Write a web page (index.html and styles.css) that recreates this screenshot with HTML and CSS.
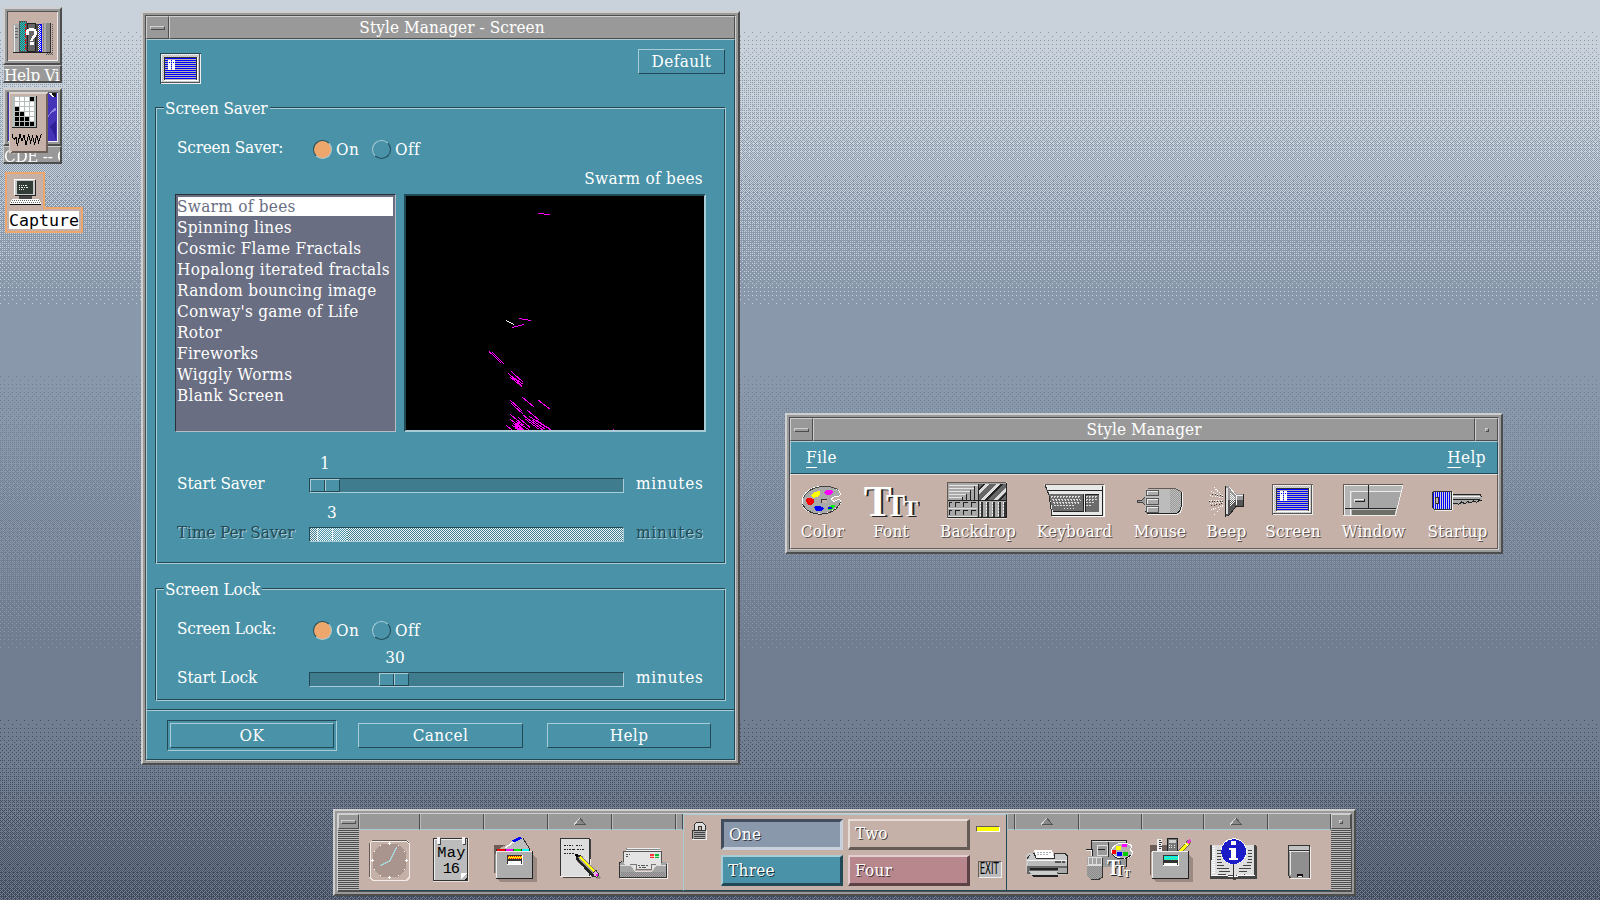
FILE: index.html
```html
<!DOCTYPE html>
<html lang="en">
<head>
<meta charset="utf-8">
<title>Style Manager - Screen</title>
<link rel="stylesheet" href="styles.css">
</head>
<body>
<svg class="defs" width="0" height="0">
  <defs>
    <pattern id="dots" width="6" height="6" patternUnits="userSpaceOnUse"><rect width="3" height="3" fill="#555"/><rect x="3" y="3" width="3" height="3" fill="#555"/></pattern>
    <pattern id="lite" width="6" height="6" patternUnits="userSpaceOnUse"><rect width="3" height="3" fill="#fff"/><rect x="3" y="3" width="3" height="3" fill="#fff"/></pattern>
    <pattern id="bluelines" width="6" height="6" patternUnits="userSpaceOnUse"><rect width="6" height="6" fill="#b4b4b4"/><rect width="6" height="3" fill="#00f"/></pattern>
    <pattern id="bluecols" width="6" height="6" patternUnits="userSpaceOnUse"><rect width="6" height="6" fill="#d0d0d8"/><rect x="3" width="3" height="6" fill="#00f"/></pattern>
    <pattern id="bluedots" width="6" height="6" patternUnits="userSpaceOnUse"><rect width="6" height="6" fill="#00f"/><rect width="3" height="3" fill="#555"/><rect x="3" y="3" width="3" height="3" fill="#555"/></pattern>
    <pattern id="keys" width="9" height="9" patternUnits="userSpaceOnUse"><rect width="9" height="9" fill="#6c6c6c"/><path d="M0 1.5H6M1.5 0V6" stroke="#ddd" stroke-width="3"/></pattern>
    <g id="monitor">
      <rect x="426" y="237" width="123" height="93" fill="#655a55"/>
      <rect x="429" y="240" width="120" height="90" fill="#eee"/>
      <rect x="432" y="243" width="111" height="81" fill="#bdbdbd"/>
      <rect x="432" y="243" width="111" height="81" fill="url(#lite)" opacity=".4"/>
      <rect x="543" y="240" width="3" height="87" fill="#555"/><rect x="429" y="324" width="117" height="3" fill="#555"/>
      <rect x="438" y="249" width="102" height="72" fill="#fff"/>
      <rect x="438" y="249" width="99" height="69" fill="#333"/>
      <rect x="441" y="252" width="93" height="66" fill="url(#bluelines)"/>
      <path d="M450 258h9v30h-9zM462 258h9v30h-9z" fill="#fff"/><path d="M453 264h3v3h-3zM465 264h3v3h-3z" fill="#00f"/>
    </g>
  </defs>
</svg>
<canvas class="backdrop" width="1600" height="900"></canvas>

<div class="icon-window help-icon">
  <div class="picture">
    <svg width="49" height="48" viewBox="24 36 147 144">
      <path d="M60 156h96V72h3v93h-22v-6H60z" fill="url(#dots)"/>
      <rect x="39" y="72" width="18" height="84" fill="#aaa"/><path d="M42 74V156" stroke="#eee" stroke-width="3"/><path d="M45 84h9M45 93h9M45 102h9M45 111h9" stroke="#666" stroke-width="3"/>
      <rect x="57" y="64" width="24" height="92" fill="#555"/><rect x="60" y="66" width="18" height="88" fill="#0dd"/><rect x="60" y="66" width="18" height="88" fill="url(#dots)"/><path d="M77 72V154" stroke="#f00" stroke-width="3" stroke-dasharray="6 3"/>
      <rect x="82" y="69" width="26" height="87" fill="#222"/><rect x="85" y="72" width="20" height="81" fill="#666"/>
      <rect x="108" y="73" width="19" height="83" fill="#00f"/><rect x="108" y="73" width="10" height="83" fill="#444"/><rect x="114" y="76" width="9" height="78" fill="url(#lite)"/>
      <rect x="129" y="69" width="24" height="87" fill="#888"/><rect x="133" y="69" width="6" height="87" fill="#aaa"/><rect x="150" y="69" width="3" height="87" fill="#333"/>
      <path d="M39 157h114" stroke="#222" stroke-width="3"/>
      <path d="M82 104v-9q2-7 13-7 12 1 12 11 0 8-6 12-6 5-6 12" fill="none" stroke="#fff" stroke-width="8"/><path d="M90 127h11v9h-11z" fill="#fff"/>
    </svg>
  </div>
  <div class="icon-label">Help Viewer</div>
</div>

<div class="icon-window cde-icon">
  <div class="picture">
    <svg width="49" height="48" viewBox="24 279 147 144">
      <rect x="24" y="279" width="147" height="144" fill="#4634b8"/>
      <path d="M144 279h24v12h-12z" fill="#fff"/><path d="M154 279h14v14q-8-4-14-14z" fill="#111"/><path d="M143 348q14-20 25-26v10q-16 4-25 22z" fill="#8c82e0"/><path d="M150 380q14 20 18 40v-60z" fill="#2f1f96"/>
    </svg>
  </div>
  <div class="icon-label cde-label">CDE -- Common</div>
</div>
<svg class="perf-icon" width="39" height="61" viewBox="27 276 117 183">
  <path d="M27 276h117v183H27z" fill="#6c5f5a"/><path d="M27 276h117l-6 6v171l-111 6z" fill="#e0d4ce"/><path d="M144 279v180H30l6-6h102V282z" fill="#6c5f5a"/><rect x="30" y="282" width="108" height="171" fill="#c6b1a8"/>
  <rect x="36" y="288" width="75" height="96" fill="#222"/><rect x="36" y="288" width="72" height="93" fill="#b4bdb8"/>
  <path d="M44 291h13v12H44zM59 291h13v12H59zM74 291h13v12H74zM44 306h13v12H44zM59 306h13v12H59zM74 306h13v12H74zM89 306h13v12H89zM59 321h13v12H59zM74 321h13v12H74zM89 321h13v12H89zM74 336h13v12H74zM89 336h13v12H89zM89 351h13v12H89z" fill="#fff"/>
  <path d="M89 291h13v12H89zM44 321h13v12H44zM44 336h13v12H44zM59 336h13v12H59zM44 351h13v12H44zM59 351h13v12H59zM74 351h13v12H74zM44 366h13v12H44zM59 366h13v12H59zM74 366h13v12H74zM89 366h13v12H89z" fill="#000"/>
  <path d="M37 402v9l6 8 5-8 4 26 8-34 6 20 6-18 6 30 8-30 6 22 6-18 6 26 6-30 6 22 5-16 4-10" fill="none" stroke="#000" stroke-width="3"/>
</svg>

<div class="capture">
  <div class="capture-pic">
    <svg width="34" height="30" viewBox="27 531 102 90">
      <path d="M43 538h62v48H43z" fill="#fff"/><path d="M46 541h62v48H46z" fill="#222"/><path d="M45 541h60v45H45z" fill="#c8c8c8"/><path d="M51 544h48v39H51z" fill="#333d38"/>
      <path d="M57 556h9M69 556h12M57 562h12M72 562h12M57 568h9M69 568h6" stroke="#eee" stroke-width="3" stroke-dasharray="3 2"/>
      <path d="M57 589h40v8H57z" fill="#444"/><path d="M36 597h81l6 12v5H30v-5z" fill="#fff"/><path d="M36 601h80M33 607h87" stroke="#666" stroke-width="3" stroke-dasharray="3 3"/><path d="M30 612h92" stroke="#111" stroke-width="3"/>
    </svg>
  </div>
  <div class="capture-label"><span>Capture</span></div>
</div>

<section class="window dialog">
  <div class="client">
    <header class="titlebar"><div class="tb-btn"><i class="dash"></i></div><div class="tb-title">Style Manager - Screen</div></header>
    <div class="dialog-body">
      <div class="dialog-head">
        <div class="screen-badge"><svg width="41" height="31" viewBox="426 237 123 93"><use href="#monitor"/><path d="M426 330V237h123v3H429v90z" fill="#214a56"/></svg></div>
        <div class="btn default-btn">Default</div>
      </div>
      <div class="group saver">
        <div class="legend"><span>Screen Saver</span></div>
        <div class="radio-row"><span class="rlabel">Screen Saver:</span><i class="radio on"></i><span class="rtext">On</span><i class="radio off"></i><span class="rtext">Off</span></div>
        <div class="saver-name">Swarm of bees</div>
        <div class="panes">
          <ul class="list">
            <li class="sel">Swarm of bees</li><li>Spinning lines</li><li>Cosmic Flame Fractals</li><li>Hopalong iterated fractals</li><li>Random bouncing image</li><li>Conway's game of Life</li><li>Rotor</li><li>Fireworks</li><li>Wiggly Worms</li><li>Blank Screen</li>
          </ul>
          <div class="preview">
            <svg width="298" height="234" viewBox="18 18 894 702">
              <g stroke="#f0f" stroke-width="3" fill="none">
                <path d="M414 70.5h18M432 73.5h18M357 385.5h9M366 388.5h18M384 391.5h9M336 412.5h6M342 409.5h12M354 406.5h12M366 403.5h6"/>
                <path d="M267 484l36 35M276 487l36 34M324 549l42 38M333 544l36 32M331 562l36 28M340 562l28 20M330 630l36 32M333 640l36 32M366 621l36 30M414 630l36 27M381 660l36 30M330 673l40 32M330 687l42 33M318 706l18 14M354 682l36 30M369 675l60 45M376 687l40 30M387 679l66 41M396 690l40 28M408 690l42 27M348 694l40 26M340 700l30 20M336 706l24 14M350 700l22 20M345 706l14 14"/>
                <path d="M342 708h20M345 714h25M350 718h22M639 718.500h3"/>
              </g>
              <path d="M318 391l24 13" stroke="#fff" stroke-width="3"/>
            </svg>
          </div>
        </div>
        <div class="scale-row first">
          <span class="slabel">Start Saver</span>
          <div class="scale"><div class="value v1">1</div><div class="trough"><i class="thumb t1"></i></div></div>
          <span class="unit">minutes</span>
        </div>
        <div class="scale-row disabled">
          <span class="slabel">Time Per Saver</span>
          <div class="scale"><div class="value v3">3</div><div class="trough"><i class="thumb t3"></i></div></div>
          <span class="unit">minutes</span>
        </div>
      </div>
      <div class="group locking">
        <div class="legend"><span>Screen Lock</span></div>
        <div class="radio-row"><span class="rlabel">Screen Lock:</span><i class="radio on"></i><span class="rtext">On</span><i class="radio off"></i><span class="rtext">Off</span></div>
        <div class="scale-row">
          <span class="slabel">Start Lock</span>
          <div class="scale"><div class="value v30">30</div><div class="trough"><i class="thumb t30"></i></div></div>
          <span class="unit">minutes</span>
        </div>
      </div>
      <footer class="actions">
        <div class="ok-ring"><div class="btn ok">OK</div></div>
        <div class="btn cancel">Cancel</div>
        <div class="btn help">Help</div>
      </footer>
    </div>
  </div>
</section>

<section class="window style-manager">
  <div class="client">
    <header class="titlebar"><div class="tb-btn"><i class="dash"></i></div><div class="tb-title">Style Manager</div><div class="tb-btn"><i class="dot"></i></div></header>
    <nav class="menubar"><span><u>F</u>ile</span><span><u>H</u>elp</span></nav>
    <div class="tools">
      <div class="tool">
        <svg width="63" height="45" viewBox="33 210 189 135">
          <path d="M66 288q3-28 36-40 30-9 55-1 20 5 24 19 1 8-8 8-16 0-18 9 2 7 10 5 8-6 16-3 5 5-6 18-18 22-50 24-22 1-40-8-20-11-19-31z" fill="#a9a9a9" stroke="#fff" stroke-width="3"/>
          <path d="M68 297q8 22 38 29 34 6 62-14l14-20" fill="none" stroke="#333" stroke-width="3"/><path d="M70 280q10-28 50-35h30l24 8" fill="none" stroke="#444" stroke-width="3"/>
          <path d="M93 270l9-9 18-3v9l-9 9-12 3z" fill="#ff0"/><path d="M132 261l6-6h15l6 6-6 9h-15z" fill="#f0f"/><path d="M78 283l9-6 15 6 0 9-9 8-12-2z" fill="#f00"/><path d="M102 306l9-4 15 3 6 6-9 7h-15z" fill="#00f"/><path d="M144 306l12-6h9v6l-12 9h-9z" fill="#0e0"/><path d="M144 306h12v6h-12z" fill="#00f"/>
          <path d="M124 283h18v12h-18z" fill="#c6b1a8"/><path d="M124 295v-12h18" fill="none" stroke="#333" stroke-width="3"/>
        </svg>
        <span>Color</span>
      </div>
      <div class="tool">
        <svg width="74" height="45" viewBox="222 210 222 135">
          <g class="ttt" lengthAdjust="spacingAndGlyphs"><g fill="#222"><text x="257" y="337" textLength="84" lengthAdjust="spacingAndGlyphs" font-size="134">T</text><text x="324" y="337" textLength="57" lengthAdjust="spacingAndGlyphs" font-size="95">T</text><text x="375" y="337" textLength="45" lengthAdjust="spacingAndGlyphs" font-size="68">T</text></g>
          <g fill="#fff"><text x="251" y="333" textLength="84" lengthAdjust="spacingAndGlyphs" font-size="134">T</text><text x="318" y="333" textLength="57" lengthAdjust="spacingAndGlyphs" font-size="95">T</text><text x="369" y="333" textLength="45" lengthAdjust="spacingAndGlyphs" font-size="68">T</text></g></g>
        </svg>
        <span>Font</span>
      </div>
      <div class="tool">
        <svg width="100" height="45" viewBox="444 210 300 135">
          <rect x="501" y="231" width="180" height="111" fill="#e6dcd8"/><rect x="501" y="231" width="177" height="108" fill="#655a55"/><rect x="504" y="234" width="174" height="105" fill="#a8a8a8"/>
          <path d="M507 241h87M507 250h78M507 259h66M507 268h51M507 277h39" stroke="#e4e4e4" stroke-width="3"/><path d="M582 244v42M570 256v30M558 266v20M546 275v12" stroke="#222" stroke-width="3"/>
          <rect x="594" y="237" width="84" height="48" fill="#666"/><path d="M594 258l21-21h14l-35 35zM600 285l48-48h12l-48 48zM640 285l38-38v12l-26 26z" fill="#ddd"/><path d="M594 252l15-15h6l-21 21zM612 285l48-48h9l-48 48zM655 285l23-23v7l-16 16z" fill="#222"/>
          <path d="M594 237v102M504 287h174" stroke="#222" stroke-width="3"/>
          <path d="M507 305v-12h9M525 305v-12h15M549 305v-12h15M573 305v-12h15M507 329v-12h9M525 329v-12h15M549 329v-12h15M573 329v-12h15" fill="none" stroke="#222" stroke-width="3"/><path d="M504 309h87M504 333h87" stroke="#ddd" stroke-width="3"/>
          <path d="M606 290v48M624 290v48M642 290v48M660 290v48M675 290v48" stroke="#333" stroke-width="6"/><path d="M600 290v48M618 290v48M636 290v48M654 290v48M669 290v48" stroke="#eee" stroke-width="3" stroke-dasharray="6 3"/>
          <path d="M504 338h174V234" fill="none" stroke="#222" stroke-width="3"/>
        </svg>
        <span>Backdrop</span>
      </div>
      <div class="tool">
        <svg width="93" height="45" viewBox="744 210 279 135">
          <path d="M792 237h180v96H816v-9l-9-52z" fill="#e8e8e8"/><path d="M794 238h178" stroke="#655a55" stroke-width="3"/><path d="M795 240l12 30 9 63" fill="none" stroke="#333" stroke-width="3"/>
          <path d="M804 256h165M968 243v88M816 330h153" stroke="#222" stroke-width="3"/><path d="M816 333h156V240" fill="none" stroke="#fff" stroke-width="3"/>
          <path d="M807 267h102v54h-90z" fill="#6c6c6c"/><path d="M916 267h41v54h-41z" fill="#6c6c6c"/>
          <path d="M813 273h90M816 282h84M819 291h81M822 300h60" stroke="#ddd" stroke-width="3" stroke-dasharray="6 3"/><path d="M812 277h90M818 286h84M821 295h78M852 309h30" stroke="#ddd" stroke-width="3" stroke-dasharray="3 6"/><path d="M919 273h33M919 282h33M919 291h24M919 300h18" stroke="#ddd" stroke-width="3" stroke-dasharray="6 3"/><path d="M919 277h33M919 286h24" stroke="#ddd" stroke-width="3" stroke-dasharray="3 6"/>
          <path d="M819 320h90v-53M916 320v-53h41" stroke="#222" stroke-width="3" fill="none"/>
        </svg>
        <span>Keyboard</span>
      </div>
      <div class="tool">
        <svg width="78" height="45" viewBox="-27 210 234 135">
          <path d="M21 285h15l9-9v24l-9-9H21z" fill="#999" stroke="#444" stroke-width="3"/>
          <path d="M54 249h84q18 3 18 20v38q-2 20-20 22H54l-9-9v-62z" fill="#bcbcbc"/><path d="M120 252h18q15 4 15 18v38q-2 15-15 18h-18z" fill="url(#dots)" opacity=".3"/>
          <path d="M54 250h80l18 9" fill="none" stroke="#655a55" stroke-width="3"/><path d="M156 262v45q-2 20-20 22H54" fill="none" stroke="#f4f4f4" stroke-width="3"/><path d="M153 262v43q-2 18-18 21H54l-8-8" fill="none" stroke="#222" stroke-width="3"/>
          <path d="M50 256h36v16H50zM50 280h36v18H50zM50 305h36v17H50z" fill="#aaa" stroke="#555" stroke-width="3"/><path d="M53 271v-12h30M53 297v-14h30M53 321v-13h30" fill="none" stroke="#eee" stroke-width="3"/>
        </svg>
        <span>Mouse</span>
      </div>
      <div class="tool">
        <svg width="55" height="45" viewBox="207 210 165 135">
          <path d="M237 285h42M240 272l40 6M240 297l40-6M252 247l27 27M252 330l27-27M243 259l36 15M243 315l36-14" stroke="#fff" stroke-width="3" stroke-dasharray="3 4"/><path d="M237 290h42M243 303l36-7M246 268l36 6" stroke="#333" stroke-width="3" stroke-dasharray="3 5"/>
          <path d="M288 243h9l21 24h24v39h-24l-21 27h-9z" fill="#999"/><path d="M288 285h54v21h-24l-21 27h-9z" fill="#555"/><path d="M286 243v92" stroke="#222" stroke-width="3"/><path d="M292 248v80" stroke="#ddd" stroke-width="6"/><path d="M297 246l21 24h22M318 274v27" stroke="#f4f4f4" stroke-width="3" fill="none"/><path d="M300 260l14 14v20l-14 14z" fill="url(#lite)"/><path d="M340 268v37h-22l-23 28" stroke="#222" stroke-width="3" fill="none"/>
        </svg>
        <span>Beep</span>
      </div>
      <div class="tool">
        <svg width="78" height="45" viewBox="372 210 234 135"><use href="#monitor"/></svg>
        <span>Screen</span>
      </div>
      <div class="tool">
        <svg width="83" height="45" viewBox="606 210 249 135">
          <path d="M639 237h180l-24 96H639z" fill="#bdbdbd"/><path d="M642 240h174l-5 20H662v72h-20z" fill="#b4b4b4"/><path d="M665 262h147l-12 47H665z" fill="#a6a6a6"/><path d="M665 316h132l-4 15H665z" fill="#6e6e66"/>
          <path d="M661 330v-71h156M642 331V241h176l-2 10-20 80H640" fill="none" stroke="#ececec" stroke-width="3"/><path d="M716 240v70M645 310h154" stroke="#222" stroke-width="3"/><path d="M639 238h180M640 237v93" stroke="#655a55" stroke-width="3"/>
          <path d="M673 290v-8h32" fill="none" stroke="#eee" stroke-width="3"/><path d="M674 290h30v-8" fill="none" stroke="#222" stroke-width="3"/>
        </svg>
        <span>Window</span>
      </div>
      <div class="tool last">
        <svg width="85" height="45" viewBox="855 210 255 135">
          <path d="M912 259h51v54h-51l-6-8v-38z" fill="url(#bluecols)"/><path d="M912 259h51v54h-51l-6-8v-38z" fill="none" stroke="#333" stroke-width="3"/><path d="M916 278h10v18h-10z" fill="#c6b1a8" stroke="#333" stroke-width="3"/>
          <path d="M966 267h81l9 12-6 12-9-3-9 6-9-3-9 6-9-3-9 6-9-4-9 4h-12z" fill="#aaa"/><path d="M966 268h84l5 8M966 283h84" fill="none" stroke="#222" stroke-width="3"/><path d="M966 274h84M966 262v52" stroke="#f4f4f4" stroke-width="3"/><path d="M968 297l9-3 9 4 9-7 9 5 9-6 9 4 9-6 9 4 8-6h8" fill="none" stroke="#222" stroke-width="3"/><path d="M915 316h51" stroke="#eee" stroke-width="3"/>
        </svg>
        <span>Startup</span>
      </div>
    </div>
  </div>
</section>

<section class="window front-panel">
  <div class="client fp">
    <div class="handle"><div class="hbtn"><i class="dash"></i></div><div class="grip"></div></div>
    <div class="wing">
      <div class="slot w61"><div class="tab"></div>
        <svg width="61" height="60" viewBox="87 75 183 180">
          <path d="M126 105h105l9 9v105l-9 9H126l-9-9V114z" fill="#e6dcd8"/><path d="M126 105h105l6 9v102l-9 9H126l-9-9V114z" fill="#655a55"/><path d="M126 108h102l9 9v99l-9 9H129l-9-9V114z" fill="#c6b1a8" stroke="#f4eeea" stroke-width="3"/>
          <path d="M153 117h51l24 24v51l-24 24h-51l-24-24v-51z" fill="#a9958d"/>
          <g fill="#fff"><path d="M174 114h9v3h-9zM177 111h3v9h-3zM174 216h9v3h-9zM177 213h3v9h-3zM123 165h9v3h-9zM126 162h3v9h-3zM225 165h9v3h-9zM228 162h3v9h-3zM150 120h3v3h-3zM204 120h3v3h-3zM132 138h3v3h-3zM222 138h3v3h-3zM132 192h3v3h-3zM222 192h3v3h-3zM150 210h3v3h-3zM204 210h3v3h-3z"/></g>
          <path d="M201 126l-21 42-30 15" fill="none" stroke="#a9d6de" stroke-width="4"/>
        </svg></div>
      <div class="slot w64"><div class="tab"></div>
        <svg width="64" height="60" viewBox="270 75 192 180">
          <path d="M309 99h108v132H309z" fill="#e6dcd8"/><path d="M309 99h105v129H309z" fill="#333"/><path d="M312 102h99v123h-99z" fill="#bcbcbc"/><path d="M313 226V103h98" stroke="#eee" stroke-width="3" fill="none"/><path d="M411 216v9h-9z" fill="#222"/><path d="M393 204h18l-18 18z" fill="#fff"/>
          <path d="M321 96h9v21h-9zM396 96h9v21h-9z" fill="#f4f4f4"/><path d="M330 99v18h-6M405 99v18h-6" stroke="#444" stroke-width="3" fill="none"/>
          <g class="cal"><text x="322" y="157" textLength="84" font-size="46">May</text><text x="338" y="204" textLength="52" font-size="46">16</text></g>
        </svg></div>
      <div class="slot w64"><div class="tab"></div>
        <svg width="64" height="60" viewBox="462 75 192 180">
          <path d="M492 120h36l-27 15v69h-9z" fill="#6c5f5a"/><path d="M495 150v54h6v-70z" fill="#999"/><path d="M609 150l12 12v69H513l-9-8h105z" fill="#9a8a83"/>
          <path d="M522 132l45-36 12 3 21 33z" fill="#bdbdbd"/><path d="M579 100l21 33" stroke="#333" stroke-width="3"/><path d="M525 129l45-33" stroke="#fff" stroke-width="4"/><path d="M546 107l24-12 6 6-24 12z" fill="#00f"/>
          <path d="M498 132h102v6H498z" fill="#333"/><path d="M501 132h24v6h-24z" fill="#f00"/><path d="M527 132h21v6h-21z" fill="#f0f"/><path d="M551 132h21v6h-21z" fill="#0e0"/><path d="M575 132h21v6h-21z" fill="#0ff"/>
          <path d="M498 138h111v84H498z" fill="#222"/><path d="M498 138h108v81H498z" fill="#adadad"/><path d="M499 219v-80h107" fill="none" stroke="#eee" stroke-width="3"/>
          <path d="M531 150h48v30h-48z" fill="#fff"/><path d="M531 150h45v27h-45z" fill="#333"/><path d="M534 153h42v9h-42z" fill="#fe0"/><path d="M534 154h42M537 160h39" stroke="#f00" stroke-width="3" stroke-dasharray="3 3"/><path d="M534 168h39v8h-39z" fill="#fff"/>
        </svg></div>
      <div class="slot w64"><div class="tab arrow"><svg width="12" height="7" viewBox="0 0 36 21"><path d="M18 0l18 21H0z" fill="#888"/><path d="M0 20L17 1" stroke="#ddd" stroke-width="3"/><path d="M18 1l16 18H3" stroke="#555" stroke-width="3" fill="none"/></svg></div>
        <svg width="64" height="60" viewBox="654 75 192 180">
          <path d="M690 99h93v117h-93z" fill="#f2ece8"/><path d="M690 99h90v114h-90z" fill="#333"/><path d="M693 102h84v111h-84z" fill="#dedede"/><path d="M780 102v60M700 216h84" stroke="#444" stroke-width="3"/>
          <path d="M702 121h27M738 121h18M702 133h33M741 133h21M702 145h30" stroke="#222" stroke-width="4" stroke-dasharray="6 3 3 2"/>
          <path d="M738 168l66 54 12-3-60-54z" fill="#9a8a83"/><path d="M738 150l12 0 51 51-3 14-12 0-48-52z" fill="#222"/><path d="M744 156l48 50" stroke="#999" stroke-width="4"/><path d="M750 155l45 46" stroke="#ff0" stroke-width="6"/><path d="M754 153l46 47" stroke="#777" stroke-width="3"/><path d="M735 146l9 0 0 9-6 3z" fill="#000"/><path d="M788 205l10-9 9 12-6 9-9-3z" fill="#e6b0e0" stroke="#333" stroke-width="3"/><path d="M798 207h6v6h-6z" fill="#f0f"/>
        </svg></div>
      <div class="slot w64"><div class="tab"></div>
        <svg width="64" height="60" viewBox="846 75 192 180">
          <path d="M888 129h102v30H888z" fill="#888"/><path d="M890 130h99M888 136h105" stroke="#eee" stroke-width="3"/><path d="M879 139h117v50H879z" fill="#555"/><path d="M882 142h111v50H882z" fill="#e4e4e4"/>
          <path d="M888 148h12M888 154h9M924 181h30M927 187h24" stroke="#555" stroke-width="3" stroke-dasharray="6 2"/><path d="M960 147h13v12h-13z" fill="#f33"/><path d="M976 147h12v12h-12z" fill="#0b3"/><path d="M960 153h27" stroke="#fff" stroke-width="2"/>
          <path d="M870 171h12l3 9h18l9 18h54l9-18h18l3-9h15v48H870z" fill="#a4a4a4"/><path d="M870 180h33l12 18h51l12-18h30" stroke="#ddd" stroke-width="3" fill="none"/><path d="M868 218V174l9-6M870 218h138v-42" stroke="#333" stroke-width="3" fill="none"/><path d="M900 177h18v17h45v-17h15" stroke="#777" stroke-width="3" fill="none"/><path d="M873 201h132v15H873z" fill="url(#dots)" opacity=".4"/><path d="M870 221h141v-48" fill="none" stroke="#f2ece8" stroke-width="3"/>
        </svg></div>
      <div class="slot fill"><div class="tab"></div></div>
    </div>
    <div class="switch">
      <div class="lock"><svg width="15" height="18" viewBox="66 51 45 54">
        <path d="M72 75V60l9-9h15l9 9v15" fill="#ddd" stroke="#333" stroke-width="3"/><path d="M84 75V63h9v12" fill="#c6b1a8" stroke="#333" stroke-width="3"/><path d="M66 75h45v30H66z" fill="#f2ece8"/><path d="M66 75h42v27H66z" fill="#333"/><path d="M69 78h39v24H69z" fill="#aaa"/><path d="M72 83h33M72 89h33M72 95h33M72 101h33" stroke="#444" stroke-width="3"/>
      </svg></div>
      <div class="workspaces">
        <div class="ws one">One</div><div class="ws two">Two</div><div class="ws three">Three</div><div class="ws four">Four</div>
      </div>
      <div class="side"><div class="blinker"></div><div class="exit"><span>EXIT</span></div></div>
    </div>
    <div class="wing right">
      <div class="slot w8"><div class="tab"></div></div>
      <div class="slot w64"><div class="tab arrow"><svg width="12" height="7" viewBox="0 0 36 21"><path d="M18 0l18 21H0z" fill="#888"/><path d="M0 20L17 1" stroke="#ddd" stroke-width="3"/><path d="M18 1l16 18H3" stroke="#555" stroke-width="3" fill="none"/></svg></div>
        <svg width="64" height="60" viewBox="30 75 192 180">
          <path d="M87 135h54l6 24H93z" fill="#fff"/><path d="M96 142h42M96 148h36" stroke="#888" stroke-width="2" stroke-dasharray="6 3"/><path d="M63 150l9-6h15l6 15h54l-3-15h36l9 9v51l-9 6H72l-9-9z" fill="#c9c9c9"/><path d="M66 162l9-12M84 144h3l6 15h54v-15h33l6 9" fill="none" stroke="#333" stroke-width="3"/><path d="M68 168h115v15H68z" fill="#bbb"/><path d="M66 166h120" stroke="#f4f4f4" stroke-width="3"/><path d="M150 172h30" stroke="#555" stroke-width="6" stroke-dasharray="18 3"/><path d="M66 183h120v24H66z" fill="#666"/><path d="M75 189h84v6H75z" fill="#222"/><path d="M72 198h87l-3 9H78z" fill="#ccc"/><path d="M78 210h82v6H84z" fill="#222"/><path d="M159 189h27v15h-27z" fill="#aaa"/><path d="M186 150v55h-27" stroke="#222" stroke-width="3" fill="none"/>
        </svg></div>
      <div class="slot w63"><div class="tab"></div>
        <svg width="63" height="60" viewBox="222 75 189 180">
          <path d="M258 105h108v81H258z" fill="#222"/><path d="M261 108h102v78H261z" fill="#9a9a9a"/><path d="M261 110h102M276 120v30h32v-30z" stroke="#ddd" stroke-width="3" fill="none"/><path d="M280 133h20" stroke="#222" stroke-width="3"/><path d="M310 110v45" stroke="#222" stroke-width="3"/>
          <path d="M243 132h18v21h6" stroke="#222" stroke-width="3" fill="none"/><path d="M243 136h15v18" stroke="#eee" stroke-width="3" fill="none"/>
          <path d="M252 153h33l9 6v57l-9 6h-27l-12-9v-51z" fill="#a4a4a4" /><path d="M246 183h45v36l-9 4h-24l-12-9z" fill="url(#dots)" opacity=".3"/><path d="M249 156h39v22h-39zM261 156v22M275 156v22M245 181h45" stroke="#ddd" stroke-width="3" fill="none"/><path d="M293 159v57l-9 6h-27" stroke="#333" stroke-width="3" fill="none"/>
          <path d="M318 138q6-18 30-24 24 0 33 9l-6 12 8 5q-3 18-24 21-30 0-41-23z" fill="#b4b4b4" stroke="#fff" stroke-width="3"/><path d="M321 147q10 16 39 15l18-12" fill="none" stroke="#222" stroke-width="3"/><path d="M333 123h15v12h-15z" fill="#ff0"/><path d="M351 117h15v9h-15z" fill="#f0f"/><path d="M320 135h13v12h-13z" fill="#f00"/><path d="M336 142h15v11h-15z" fill="#00f"/><path d="M354 142h15v12h-15z" fill="#0c0"/><path d="M363 132h12v6h-12z" fill="#c6b1a8"/>
          <g class="ttt"><g fill="#222"><text x="310" y="212" textLength="38" lengthAdjust="spacingAndGlyphs" font-size="68">T</text><text x="334" y="217" textLength="28" lengthAdjust="spacingAndGlyphs" font-size="50">T</text><text x="360" y="218" textLength="18" lengthAdjust="spacingAndGlyphs" font-size="32">T</text></g><g fill="#fff"><text x="306" y="209" textLength="38" lengthAdjust="spacingAndGlyphs" font-size="68">T</text><text x="330" y="214" textLength="28" lengthAdjust="spacingAndGlyphs" font-size="50">T</text><text x="357" y="215" textLength="18" lengthAdjust="spacingAndGlyphs" font-size="32">T</text></g></g>
        </svg></div>
      <div class="slot w62"><div class="tab"></div>
        <svg width="62" height="60" viewBox="411 75 186 180">
          <path d="M435 120h75v20h-72v69h-3z" fill="#6c5f5a"/><path d="M552 150l12 12v69H456l-9-8h105z" fill="#9a8a83"/>
          <path d="M456 102h15v36h-15z" fill="#eee"/><path d="M461 106h6M461 112h9M461 118h6M461 124h9M461 130h6" stroke="#333" stroke-width="3"/><path d="M485 99h33v39h-33z" fill="#222"/><path d="M488 102h27v36h-27z" fill="#777"/><path d="M491 105h21v9h-21z" fill="#ccc"/><path d="M492 120h21M492 128h21" stroke="#eee" stroke-width="3" stroke-dasharray="3 4"/>
          <path d="M520 138l30-33 9 6-24 27z" fill="#ff0" stroke="#333" stroke-width="2"/><path d="M543 111l9-9 6 3v6l-9 6z" fill="#e3d"/><path d="M539 114l9 7" stroke="#fff" stroke-width="3"/>
          <path d="M441 138h111v84H441z" fill="#222"/><path d="M441 138h108v81H441z" fill="#adadad"/><path d="M442 219v-80h107" fill="none" stroke="#eee" stroke-width="3"/>
          <path d="M474 150h48v33h-48z" fill="#fff"/><path d="M474 150h45v30h-45z" fill="#333"/><path d="M477 153h42v12h-42z" fill="#0ee"/><path d="M477 157h42M480 163h39" stroke="#7e6" stroke-width="3" stroke-dasharray="3 3"/><path d="M477 174h39v6h-39z" fill="#fff"/>
        </svg></div>
      <div class="slot w64"><div class="tab arrow"><svg width="12" height="7" viewBox="0 0 36 21"><path d="M18 0l18 21H0z" fill="#888"/><path d="M0 20L17 1" stroke="#ddd" stroke-width="3"/><path d="M18 1l16 18H3" stroke="#555" stroke-width="3" fill="none"/></svg></div>
        <svg width="64" height="60" viewBox="597 75 192 180">
          <path d="M615 120l70 6 65-6 6 6v96h-60l-9 3-9-3h-63z" fill="#444"/><path d="M621 121q30-4 63 6v84q-33-6-66 0z" fill="#dedede"/><path d="M688 127q25-9 58-6v90q-33-6-58 2z" fill="#dedede"/><path d="M624 124v84" stroke="#fff" stroke-width="9" stroke-dasharray="3 3"/>
          <path d="M636 136h15M636 145h12M636 154h12M636 163h12M636 172h15M636 181h21M636 190h36M642 199h33M729 136h12M729 145h12M729 154h12M729 163h12M726 172h15M714 181h24M702 190h36M702 199h24" stroke="#444" stroke-width="3"/><path d="M618 213q34-6 66 3 30-9 66-3" fill="none" stroke="#fff" stroke-width="3"/><path d="M685 180v42" stroke="#333" stroke-width="4"/>
          <circle cx="686" cy="139" r="39" fill="#fff"/><circle cx="686" cy="140" r="37" fill="#00f"/><circle cx="686" cy="140" r="37" fill="url(#bluedots)" opacity=".6"/>
          <path d="M679 109h15v12h-15zM673 129h21v30h6v6h-28v-6h7v-24h-6z" fill="#fff"/>
        </svg></div>
      <div class="slot fill"><div class="tab"></div>
        <svg width="63" height="60" viewBox="789 75 189 180">
          <path d="M850 120h66v102h-60l-6-9z" fill="#333"/><path d="M852 126l6-3h54l3 3v93h-57l-6-9z" fill="#8f8f8f"/><path d="M852 124h60v12h-60z" fill="#c2c2c2"/><path d="M852 138h61M855 142v68" stroke="#e4e4e4" stroke-width="3"/><path d="M912 124v96h-54M852 136h60" stroke="#333" stroke-width="3" fill="none"/><path d="M876 207h18v9h-18z" fill="#111"/><path d="M880 214h12" stroke="#eee" stroke-width="3"/><path d="M855 221h62v-96" stroke="#f2ece8" stroke-width="3" fill="none"/>
        </svg></div>
    </div>
    <div class="handle end"><div class="hbtn"><i class="dot"></i></div><div class="grip"></div></div>
  </div>
</section>
<script src="backdrop.js"></script>
</body>
</html>
```
FILE: styles.css
```css
:root {
  --teal: #4992a7; --teal-l: #a9ccd7; --teal-d: #214a56; --trough: #3e7c8e;
  --gray: #999; --gray-l: #cfcfcf; --gray-d: #4d4d4d;
  --pink: #c6b1a8; --pink-l: #e6dcd8; --pink-d: #655a55;
}
* { box-sizing: border-box; }
body {
  margin: 0; width: 1600px; height: 900px; overflow: hidden; position: relative; background: #8a98ac;
  font-family: "DejaVu Serif Condensed", "DejaVu Serif", serif; font-stretch: condensed;
  font-size: 17px; line-height: 22px; letter-spacing: 0.1px; color: #fff; white-space: nowrap;
}
svg { display: block; shape-rendering: crispEdges; }
.defs { position: absolute; }
.backdrop { position: absolute; left: 0; top: 0; }
i { display: block; }

/* desktop icons */
.icon-window { position: absolute; left: 3px; width: 59px; }
.help-icon { top: 7px; }
.cde-icon { top: 88px; }
.picture { width: 59px; height: 58px; background: var(--pink); border: 2px solid; border-color: var(--gray-l) var(--gray-d) var(--gray-d) var(--gray-l); box-shadow: inset 0 0 0 2px var(--gray), inset 3px 3px 0 #555, inset -3px -3px 0 #eee; padding: 3px; }
.icon-label { height: 18px; background: var(--gray); border: 1px solid; border-color: var(--gray-l) var(--gray-d) var(--gray-d) var(--gray-l); border-width: 1px 2px 2px 1px; line-height: 18px; overflow: hidden; letter-spacing: -0.3px; }
.perf-icon { position: absolute; left: 9px; top: 92px; }
.capture { position: absolute; left: 5px; top: 172px; width: 78px; }
.capture-pic { position: relative; z-index: 1; width: 40px; height: 37px; background: var(--pink); border: 2px solid #eda66c; border-bottom: 0; padding: 3px 2px; }
.capture-label { height: 26px; margin-top: -2px; background: var(--pink); border: 2px solid #eda66c; padding: 2px; }
.capture-label span { display: block; height: 18px; width: 70px; background: #fff; color: #000; font: 16.6px/20px "DejaVu Sans Mono", monospace; letter-spacing: 0; }

/* window frames */
.window { position: absolute; background: var(--gray); border: 2px solid; border-color: var(--gray-l) var(--gray-d) var(--gray-d) var(--gray-l); padding: 2px; }
.client { height: 100%; border: 1px solid; border-color: var(--gray-d) var(--gray-l) var(--gray-l) var(--gray-d); display: flex; flex-direction: column; }
.titlebar { display: flex; height: 23px; flex: none; }
.tb-btn, .tb-title, .hbtn { border: 1px solid; border-color: var(--gray-l) var(--gray-d) var(--gray-d) var(--gray-l); }
.tb-btn { width: 23px; display: flex; align-items: center; justify-content: center; }
.tb-title { flex: 1; text-align: center; line-height: 20px; }
.dash { width: 15px; height: 4px; border: 1px solid; border-color: var(--gray-l) var(--gray-d) var(--gray-d) var(--gray-l); }
.dot { width: 4px; height: 4px; border: 1px solid; border-color: var(--gray-l) var(--gray-d) var(--gray-d) var(--gray-l); }

/* screen dialog */
.dialog { left: 141px; top: 11px; width: 599px; height: 754px; }
.dialog-body { flex: 1; background: var(--teal); border: 1px solid; border-color: var(--teal-l) var(--teal-d) var(--teal-d) var(--teal-l); }
.dialog-head { display: flex; justify-content: space-between; height: 67px; padding: 9px 9px 0 13px; }
.screen-badge { margin-top: 4px; }
.btn { height: 25px; border: 1px solid; border-color: var(--teal-l) var(--teal-d) var(--teal-d) var(--teal-l); text-align: center; line-height: 22px; letter-spacing: 0.4px; }
.default-btn { width: 87px; }
.group { margin: 0 8px; border: 1px solid; border-color: var(--teal-d) var(--teal-l) var(--teal-l) var(--teal-d); box-shadow: inset 1px 1px 0 var(--teal-l), inset -1px -1px 0 var(--teal-d); padding: 0 21px 0 19px; }
.saver { height: 457px; }
.locking { height: 113px; margin-top: 24px; }
.legend { margin: -11px 0 0 -11px; height: 22px; letter-spacing: -0.1px; }
.legend span { display: inline-block; background: var(--teal); padding: 0 2px 0 1px; }
.radio-row { display: flex; margin: 17px 0 0 2px; height: 24px; }
.rlabel { width: 136px; letter-spacing: -0.2px; }
.radio { width: 19px; height: 19px; border-radius: 50%; border: 1.500px solid; margin-top: 4px; }
.radio.on { background: #eda66c; border-color: var(--teal-d) var(--teal-l) var(--teal-l) var(--teal-d); }
.radio.off { border-color: var(--teal-l) var(--teal-d) var(--teal-d) var(--teal-l); }
.rtext { width: 40px; padding: 2px 0 0 4px; letter-spacing: 0.4px; }
.saver-name { text-align: right; margin: 7px 1px 0 0; height: 22px; letter-spacing: 0.3px; }
.panes { display: flex; justify-content: space-between; height: 238px; margin: 5px -2px 0 0; }
.list { margin: 0; padding: 1px 2px; list-style: none; width: 221px; background: #696e82; border: 1px solid; border-color: #2c2f39 #b9bcc6 #b9bcc6 #2c2f39; letter-spacing: 0.3px; }
.list li { height: 21px; border: solid transparent; border-width: 1px 0; background-clip: padding-box; line-height: 19px; text-indent: -1px; }
.list .sel { background-color: #fff; color: #696e82; }
.preview { width: 302px; background: #000; border: 2px solid; border-color: var(--teal-d) var(--teal-l) var(--teal-l) var(--teal-d); }
.scale-row { display: flex; height: 42px; margin: 7px 0 0 2px; }
.scale-row.first { margin-top: 20px; }
.locking .scale-row { margin-top: 5px; }
.slabel { width: 132px; padding-top: 20px; letter-spacing: -0.1px; }
.unit { padding: 20px 0 0 12px; letter-spacing: 0.8px; }
.scale { width: 315px; }
.value { height: 26px; text-align: center; width: 30px; }
.v3 { margin-left: 8px; }
.v1 { margin-left: 1px; }
.v30 { margin-left: 71px; }
.trough { height: 15px; background: var(--trough); border: 1px solid; border-color: var(--teal-d) var(--teal-l) var(--teal-l) var(--teal-d); }
.thumb { width: 30px; height: 13px; background: linear-gradient(90deg, transparent 13px, var(--teal-d) 13px 14px, var(--teal-l) 14px 15px, transparent 15px) var(--teal); border: 1px solid; border-color: var(--teal-l) var(--teal-d) var(--teal-d) var(--teal-l); }
.t3 { margin-left: 7px; }
.t30 { margin-left: 69px; }
.disabled .slabel, .disabled .unit { color: var(--teal-d); text-shadow: 1px 1px 0 var(--teal-l); }
.disabled .trough { background: repeating-conic-gradient(#f0f6f8 0 25%, var(--trough) 0 50%) 0 0 / 2px 2px; }
.disabled .thumb { background: linear-gradient(90deg, transparent 14px, #e4eff3 14px 15px, transparent 15px), repeating-conic-gradient(#f0f6f8 0 25%, var(--teal) 0 50%) 0 0 / 2px 2px; border-color: transparent transparent transparent #e4eff3; }
.actions { margin-top: 8px; border-top: 1px solid var(--teal-d); box-shadow: inset 0 1px 0 var(--teal-l); display: flex; padding: 10px 0 0 20px; }
.ok-ring { width: 170px; height: 31px; padding: 2px; border: 1px solid; border-color: var(--teal-d) var(--teal-l) var(--teal-l) var(--teal-d); }
.cancel { width: 165px; margin: 3px 24px 0 21px; }
.help { width: 164px; margin-top: 3px; }

/* style manager */
.style-manager { left: 785px; top: 413px; width: 718px; height: 141px; }
.menubar { height: 33px; background: var(--teal); border: 1px solid; border-color: var(--teal-l) var(--teal-d) var(--teal-d) var(--teal-l); display: flex; justify-content: space-between; padding: 4px 11px 0 15px; letter-spacing: 0.4px; }
.menubar u { text-decoration-thickness: 1px; text-underline-offset: 4px; }
.tools { flex: 1; background: var(--pink); border: 1px solid; border-color: var(--pink-l) var(--pink-d) var(--pink-d) var(--pink-l); display: flex; }
.tool { flex: none; text-align: center; text-shadow: 1px 1px 0 #5a504c; letter-spacing: 0.2px; }
.tool span { display: block; }
.last { margin-right: -3px; }
.ttt { font-family: "Liberation Serif", serif; font-weight: bold; letter-spacing: 0; text-shadow: none; }
.cal { font-family: "Liberation Mono", monospace; letter-spacing: 0; fill: #000; }

/* front panel */
.front-panel { left: 333px; top: 809px; width: 1023px; height: 87px; }
.fp { flex-direction: row; border-color: var(--gray-l) var(--gray-d) var(--gray-d) var(--gray-l); }
.handle { flex: none; width: 21px; display: flex; flex-direction: column; }
.handle.end { width: 20px; }
.hbtn { height: 15px; display: flex; align-items: center; justify-content: center; }
.grip { flex: 1; background: repeating-linear-gradient(#bbb 0 1px, #4d4d4d 1px 2px); }
.wing { flex: none; display: flex; width: 324px; background: var(--pink); border-bottom: 1px solid var(--teal-d); }
.slot { flex: none; }
.w61 { width: 61px; } .w62 { width: 62px; } .w63 { width: 63px; } .w64 { width: 64px; } .w8 { width: 8px; }
.fill { flex: 1; }
.tab { height: 16px; background: var(--gray); border-right: 1px solid var(--gray-d); box-shadow: inset 1px 0 0 #bbb; border-bottom: 1px solid var(--teal-l); display: flex; align-items: center; justify-content: center; }
.switch { flex: none; width: 324px; background: var(--pink); border: 1px solid; border-color: var(--teal-l) var(--teal-d) var(--teal-d) var(--teal-l); display: flex; padding: 4px 4px 0 8px; }
.lock { width: 29px; padding-top: 3px; flex: none; }
.workspaces { display: grid; grid-template-columns: 122px 122px; grid-template-rows: 31px 31px; gap: 5px; width: 249px; flex: none; }
.ws { border: solid; border-width: 2px 3px 3px 2px; padding-left: 5px; line-height: 25px; letter-spacing: 0.3px; text-shadow: 1px 1px 0 rgba(0, 0, 0, .65); }
.one { background: #8a98ac; border-color: #434c5c #c9d1dc #c9d1dc #434c5c; border-width: 3px; line-height: 24px; }
.two { background: var(--pink); border-color: var(--pink-l) var(--pink-d) var(--pink-d) var(--pink-l); }
.three { background: var(--teal); border-color: var(--teal-l) var(--teal-d) var(--teal-d) var(--teal-l); }
.four { background: #b8868d; border-color: #e3cdd0 #5c4246 #5c4246 #e3cdd0; }
.three, .four { line-height: 27px; }
.side { padding: 7px 0 0 6px; }
.blinker { width: 24px; height: 6px; background: #ff0; border: 1px solid; border-color: #655a55 #fff #fff #655a55; }
.exit { margin: 29px 0 0 2px; width: 24px; height: 17px; background: #bdbdbd; border: 1px solid; border-color: #655a55 #eee #eee #655a55; color: #000; font: 15px/15px "DejaVu Sans Condensed", sans-serif; letter-spacing: 0; }
.exit span { display: block; width: 32px; transform: scaleX(.64); transform-origin: 0 0; padding-left: 1px; }
```
FILE: backdrop.js
```js
// Ordered-dither vertical gradient for the desktop.
const bayer = (x, y) => {
  let v = 0;
  for (let b = 0; b < 3; b++) {
    const xb = (x >> b) & 1, yb = (y >> b) & 1;
    v = v * 4 + ((xb ^ yb) * 2 + yb);
  }
  return v;
};
const ramp = [[201, 209, 218], [138, 152, 172], [113, 125, 144], [67, 76, 92]];
const ctx = document.querySelector('.backdrop').getContext('2d');
const img = ctx.createImageData(1600, 900);
for (let y = 0; y < 900; y++) {
  const t = Math.max(0, y - 28);
  const seg = Math.min(2, Math.floor(t / 344.5));
  const level = y < 28 ? 0 : Math.ceil(Math.min(1, (t - seg * 344.5) / 283) * 64);
  for (let x = 0; x < 1600; x++) {
    const c = ramp[bayer(x & 7, y & 7) < level ? seg + 1 : seg];
    const p = (y * 1600 + x) * 4;
    img.data[p] = c[0]; img.data[p + 1] = c[1]; img.data[p + 2] = c[2]; img.data[p + 3] = 255;
  }
}
ctx.putImageData(img, 0, 0);
```
